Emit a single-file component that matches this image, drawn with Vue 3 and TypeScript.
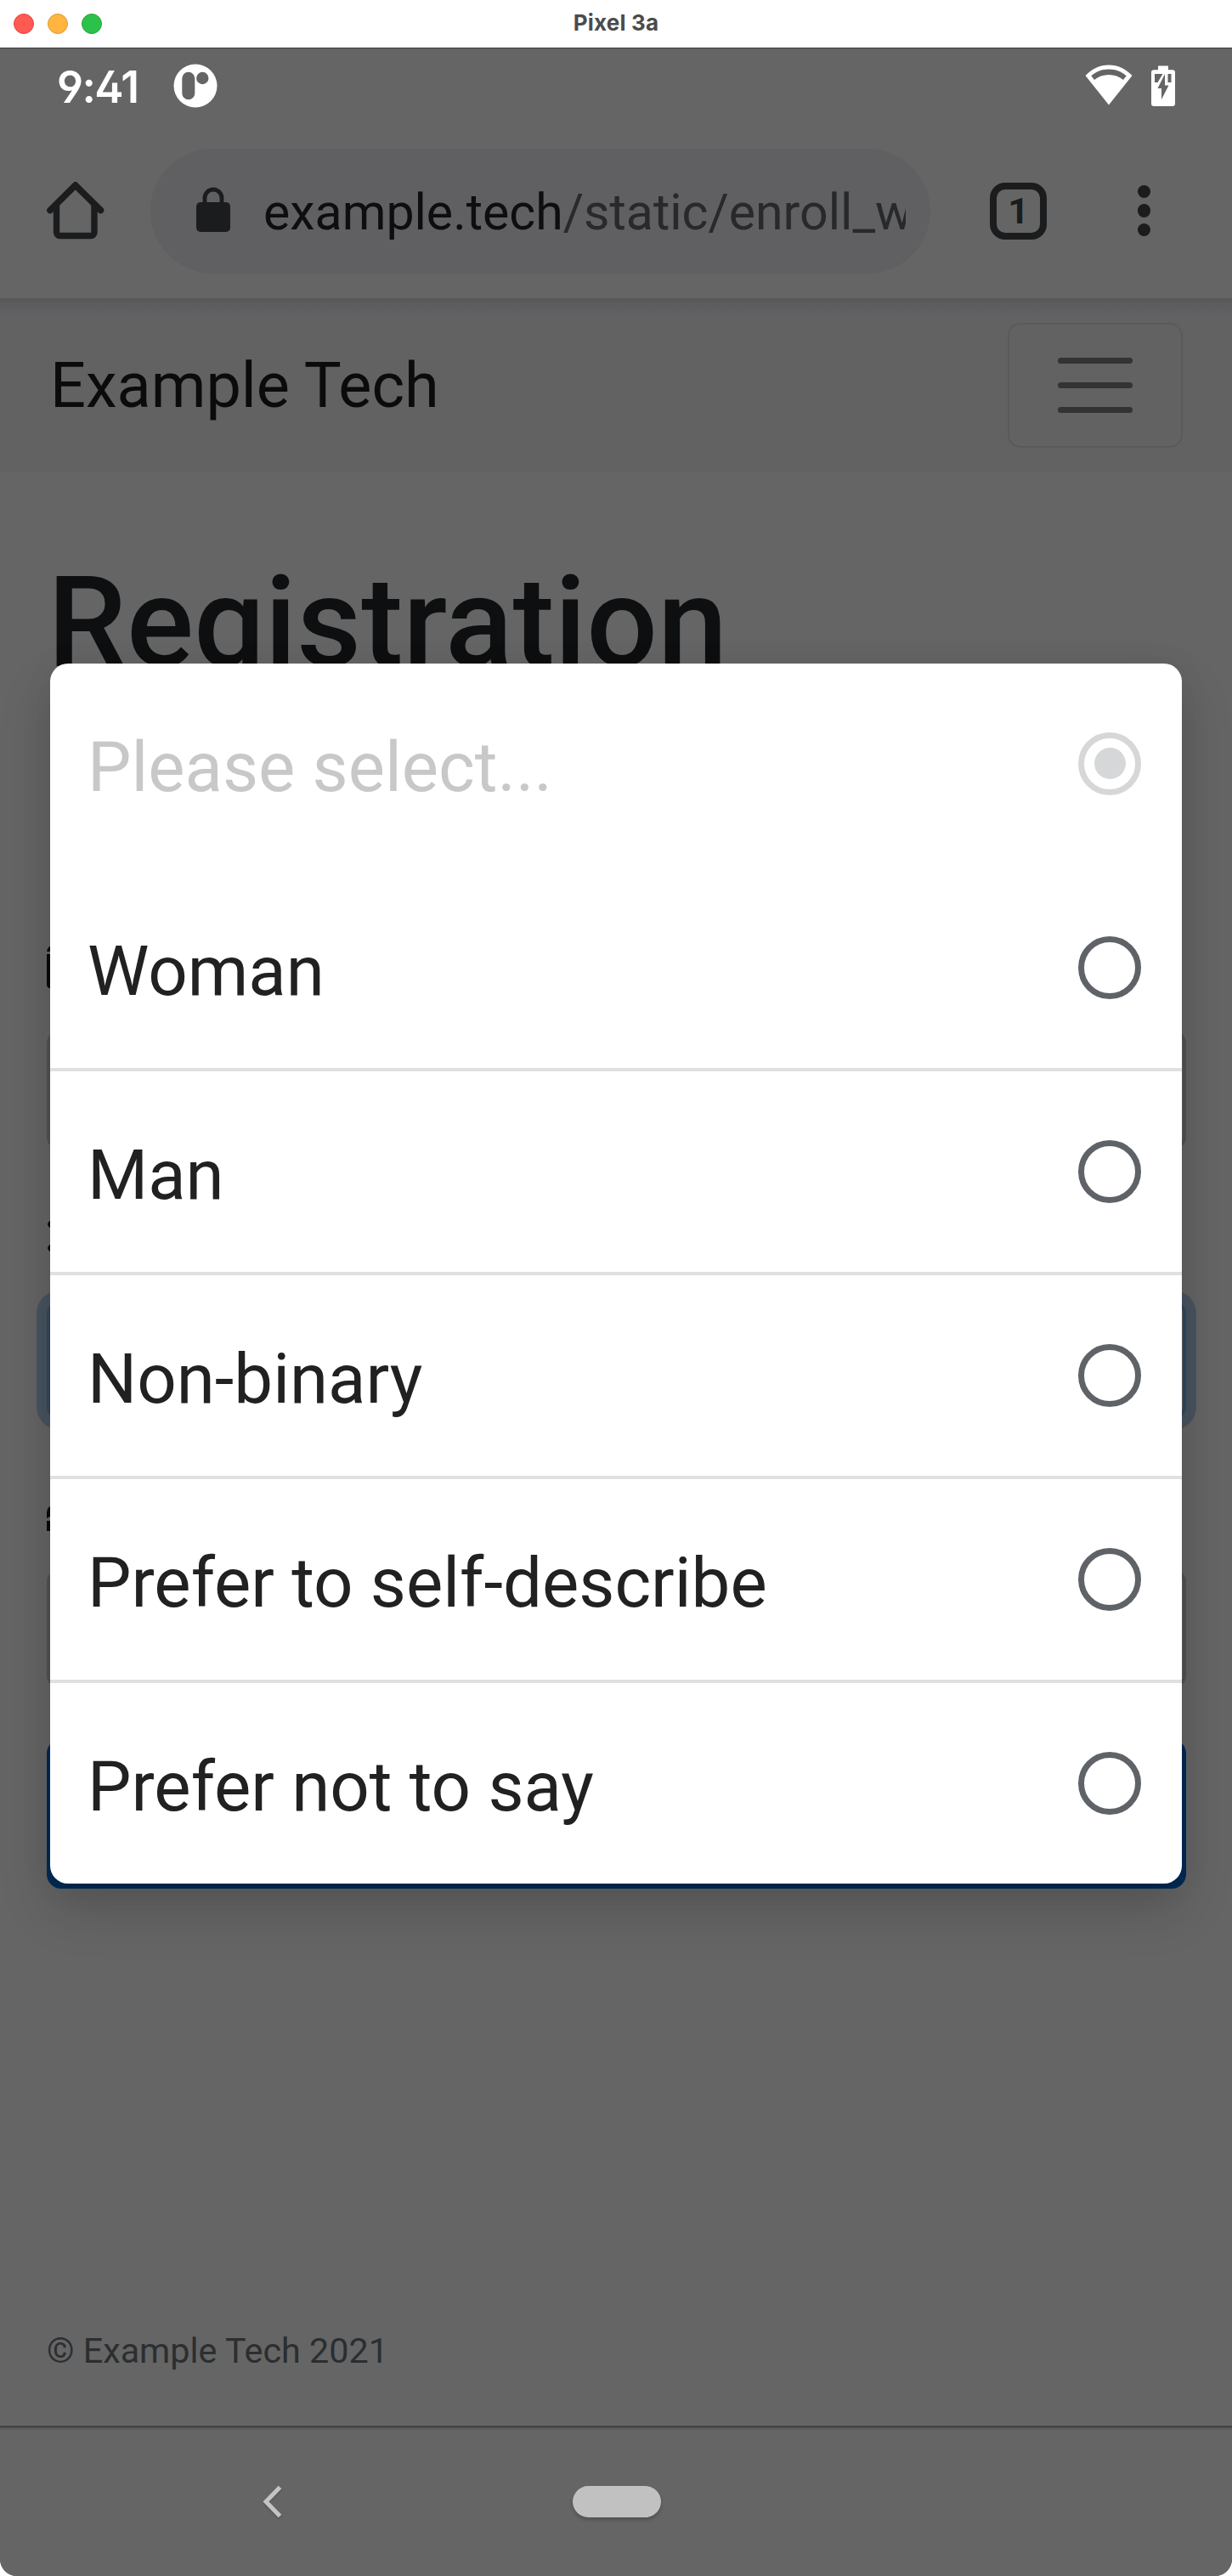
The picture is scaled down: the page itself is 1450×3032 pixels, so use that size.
<script setup lang="ts">
interface Option {
  label: string
  disabled?: boolean
  selected?: boolean
}

const options: Option[] = [
  { label: 'Please select...', disabled: true, selected: true },
  { label: 'Woman' },
  { label: 'Man' },
  { label: 'Non-binary' },
  { label: 'Prefer to self-describe' },
  { label: 'Prefer not to say' },
]
</script>

<template>
  <div class="window">
    <header class="titlebar">
      <div class="lights">
        <span class="light red"></span>
        <span class="light amber"></span>
        <span class="light green"></span>
      </div>
      <span class="title">Pixel 3a</span>
    </header>

    <div class="screen">
      <div class="status">
        <span class="clock">9:41</span>
        <svg class="app-badge" width="52" height="52" viewBox="0 0 52 52">
          <path
            fill="#fff"
            fill-rule="evenodd"
            d="M26 .5a25.5 25.5 0 1 1 0 51a25.5 25.5 0 1 1 0-51zM10.3 17.300v17.400a7.500 7.500 0 0 0 15 0v-17.400a7.500 7.500 0 0 0-15 0zM34.300 9.800a7.200 7.200 0 1 0 0 14.400a7.200 7.200 0 1 0 0-14.400z"
          />
        </svg>
        <svg class="wifi" width="56" height="48" viewBox="0 0 56 48">
          <path
            fill="#fff"
            fill-rule="evenodd"
            d="M28 .5C17.500 .5 8 5 .5 13L28 47.500L55.500 13C48 5 38.500 .5 28 .5zM28 5.500C36 5.500 43 8.200 48.700 13.200L45 18C40.500 14 34.500 12 28 12S15.500 14 11 18L7.300 13.200C13 8.200 20 5.500 28 5.500z"
          />
        </svg>
        <svg class="battery" width="30" height="48" viewBox="0 0 30 48">
          <path
            fill="#fff"
            fill-rule="evenodd"
            d="M9 .5h12v4.700h5a3 3 0 0 1 3 3V45a3 3 0 0 1-3 3H4a3 3 0 0 1-3-3V8.200a3 3 0 0 1 3-3h5zM5 10v10h3.500L14.500 10zM17 10L8.500 27h4.500V40L21.500 23.500H17zM20.500 10v10H24.500V10z"
          />
        </svg>
      </div>

      <div class="toolbar">
        <svg class="home" width="68" height="68" viewBox="0 0 68 68" fill="none" stroke="#1b1c1e">
          <path d="M4 33.500L33.700 4L63.500 33.500" stroke-width="7.600" stroke-linecap="round" />
          <path d="M11.500 27V59.500a4 4 0 0 0 4 4h36.500a4 4 0 0 0 4-4V27" stroke-width="7.400" />
        </svg>
        <div class="omnibox">
          <svg class="lock" width="42" height="54" viewBox="0 0 42 54">
            <rect x="1" y="18" width="40" height="35" rx="5" fill="#1b1c1e" />
            <path d="M11 20V13a10 10 0 0 1 20 0v7" fill="none" stroke="#1b1c1e" stroke-width="4.800" />
          </svg>
          <div class="url"><span class="host">example.tech</span>/static/enroll_w</div>
        </div>
        <div class="tabs">1</div>
        <div class="more"><i></i><i></i><i></i></div>
      </div>

      <nav class="navbar">
        <span class="brand">Example Tech</span>
        <div class="toggler"><i></i><i></i><i></i></div>
      </nav>

      <main class="page">
        <h1>Registration</h1>
        <svg class="label-edge first" width="6" height="52" viewBox="0 0 6 52">
          <path fill="#0a0b0b" d="M6 0V7H0Q1 1 6 0zM0 10H6V51Q0 50 0 46z" />
        </svg>
        <div class="field one"></div>
        <svg class="label-edge second" width="6" height="38" viewBox="0 0 6 38">
          <path fill="#0a0b0b" d="M6 0V10Q2 9 1 5Q2 1 6 0zM6 28V38Q2 37 1 33Q2 29 6 28z" />
        </svg>
        <div class="field focused"></div>
        <svg class="label-edge third" width="6" height="30" viewBox="0 0 6 30">
          <path fill="#0a0b0b" d="M6 0V12L0 15V8Q1 1 6 0zM0 18H6V30H0z" />
        </svg>
        <div class="field three"></div>
        <div class="submit"></div>
        <footer class="footer">© Example Tech 2021</footer>
      </main>

      <div class="softkeys">
        <svg class="back" width="24" height="40" viewBox="0 0 24 40">
          <path d="M20.500 2.500L4 19.500L20.500 36.500" fill="none" stroke="#c4c4c4" stroke-width="5" />
        </svg>
        <span class="home-pill"></span>
      </div>
    </div>

    <div class="dialog">
      <div
        v-for="(option, i) in options"
        :key="option.label"
        class="option"
        :class="{ disabled: option.disabled, divided: i > 0 && i < options.length - 1 }"
      >
        <span class="label">{{ option.label }}</span>
        <span class="radio"><i v-if="option.selected"></i></span>
      </div>
    </div>
  </div>
</template>

<style>
body {
  margin: 0;
  background: #fff;
}
</style>

<style scoped>
.window {
  position: relative;
  width: 1450px;
  height: 3032px;
  box-sizing: border-box;
  overflow: hidden;
  background: #fff;
  font-family: Roboto, sans-serif;
}
.window * {
  box-sizing: border-box;
}
.titlebar {
  height: 56px;
  display: grid;
  grid-template-columns: 1fr auto 1fr;
  align-items: center;
}
.lights {
  display: flex;
  gap: 16px;
  padding-left: 16px;
}
.light {
  width: 24px;
  height: 24px;
  border-radius: 50%;
  border: 1px solid;
}
.red {
  background: #ff5a52;
  border-color: #e2463f;
}
.amber {
  background: #ffb53f;
  border-color: #e09a33;
}
.green {
  background: #2cc14b;
  border-color: #1fa838;
}
.title {
  font: 700 26px/32px Inter, sans-serif;
  letter-spacing: 0.2px;
  color: #4b4b4b;
  padding-bottom: 2px;
}
.screen {
  height: 2976px;
  display: flex;
  flex-direction: column;
  background: #656565;
  border-top: 1px solid #3a3a3a;
  border-radius: 0 0 20px 20px;
  overflow: hidden;
}
.status {
  height: 88px;
  flex: none;
  display: flex;
  align-items: center;
  padding: 0 66px 0 67px;
}
.clock {
  width: 137px;
  font: 600 51.5px/60px Inter, sans-serif;
  font-feature-settings: 'ss01';
  letter-spacing: -1.6px;
  color: #fff;
  padding-top: 2px;
}
.app-badge {
  margin-bottom: 1px;
}
.wifi {
  margin: 0 21px 2px auto;
}
.battery {
  margin-bottom: 1px;
}
.toolbar {
  height: 206px;
  flex: none;
  display: flex;
  align-items: center;
  padding-left: 55px;
}
.home {
  flex: none;
}
.omnibox {
  width: 918px;
  height: 147px;
  margin-left: 54px;
  border-radius: 74px;
  background: #606062;
  display: flex;
  align-items: center;
  padding: 0 29px 0 53px;
  flex: none;
}
.lock {
  flex: none;
  margin-bottom: 2px;
}
.url {
  flex: 1;
  margin-left: 38px;
  overflow: hidden;
  white-space: nowrap;
  font-size: 59px;
  line-height: 80px;
  padding-top: 4px;
  color: #27292b;
}
.host {
  color: #0d0e0f;
}
.tabs {
  width: 67px;
  height: 67px;
  margin-left: 70px;
  border: 8px solid #1b1c1e;
  border-radius: 18px;
  flex: none;
  font: 700 43px/51px Roboto, sans-serif;
  text-align: center;
  color: #1b1c1e;
}
.more {
  margin-left: 107px;
  display: flex;
  flex-direction: column;
  gap: 7px;
}
.more i {
  width: 15.4px;
  height: 15.4px;
  border-radius: 50%;
  background: #1b1c1e;
}
.navbar {
  height: 205px;
  flex: none;
  display: flex;
  align-items: center;
  justify-content: space-between;
  padding: 0 58px 0 59px;
  background: linear-gradient(#575759, #5c5c5e 6px, #616163 18px, #626262 26px);
}
.brand {
  font-size: 73.8px;
  line-height: 110px;
  color: #0b0b0b;
}
.toggler {
  width: 206px;
  height: 147px;
  border: 2px solid #5a5a5a;
  border-radius: 15px;
  display: flex;
  flex-direction: column;
  align-items: center;
  justify-content: center;
  gap: 21.7px;
}
.toggler i {
  width: 88px;
  height: 7.4px;
  border-radius: 4px;
  background: #333;
}
.page {
  height: 2299px;
  flex: none;
  display: flex;
  flex-direction: column;
  padding: 90px 54px 0 55px;
}
h1 {
  margin: 0;
  padding-left: 1px;
  font-size: 147.6px;
  line-height: 176px;
  font-weight: 500;
  color: #0d0f10;
}
.label-edge {
  flex: none;
}
.first {
  margin-top: 291px;
}
.field {
  flex: none;
  height: 140px;
  border: 4px solid #505354;
  border-radius: 15px;
  background: #646566;
}
.one {
  margin-top: 48px;
}
.second {
  margin-top: 83px;
}
.focused {
  margin-top: 57px;
  border-color: #34485c;
  box-shadow: 0 0 0 12px #485461;
}
.third {
  margin-top: 101px;
}
.three {
  margin-top: 45px;
}
.submit {
  flex: none;
  height: 176px;
  margin-top: 60px;
  border-radius: 17px;
  background: #002b57;
}
.footer {
  margin-top: 518px;
  font-size: 41.3px;
  line-height: 52px;
  color: #2b2e31;
}
.softkeys {
  flex: 1;
  display: flex;
  align-items: center;
  padding: 2px 0 0 309px;
  background: linear-gradient(#434343, #454545 2px, #5a5a5b 3px, #656565 6px);
}
.back {
  filter: drop-shadow(0 2px 1px rgba(0, 0, 0, 0.15));
}
.home-pill {
  width: 104px;
  height: 37px;
  margin-left: 341px;
  border-radius: 19px;
  background: #c1c1c1;
  box-shadow: 0 3px 4px rgba(0, 0, 0, 0.2);
}
.dialog {
  position: absolute;
  left: 59px;
  top: 781px;
  width: 1332px;
  height: 1436px;
  border-radius: 21px;
  background: #fff;
  overflow: hidden;
  box-shadow: 0 30px 60px rgba(0, 0, 0, 0.17), 0 4px 40px rgba(0, 0, 0, 0.05);
}
.option {
  height: 240px;
  display: flex;
  align-items: center;
  justify-content: space-between;
  padding: 0 48px 0 44px;
  color: #212121;
}
.divided {
  background: linear-gradient(#e0e0e0, #e0e0e0) 0 100% / 100% 4px no-repeat;
}
.label {
  font-size: 81.6px;
  line-height: 110px;
  padding-top: 4px;
}
.radio {
  width: 74px;
  height: 74px;
  margin-bottom: 5px;
  border: 7.4px solid #5f6368;
  border-radius: 50%;
  display: flex;
  align-items: center;
  justify-content: center;
}
.radio i {
  width: 37px;
  height: 37px;
  border-radius: 50%;
  background: #d6d7d8;
}
.disabled {
  color: #c8c8c8;
}
.disabled .radio {
  border-color: #d6d7d8;
}
</style>
